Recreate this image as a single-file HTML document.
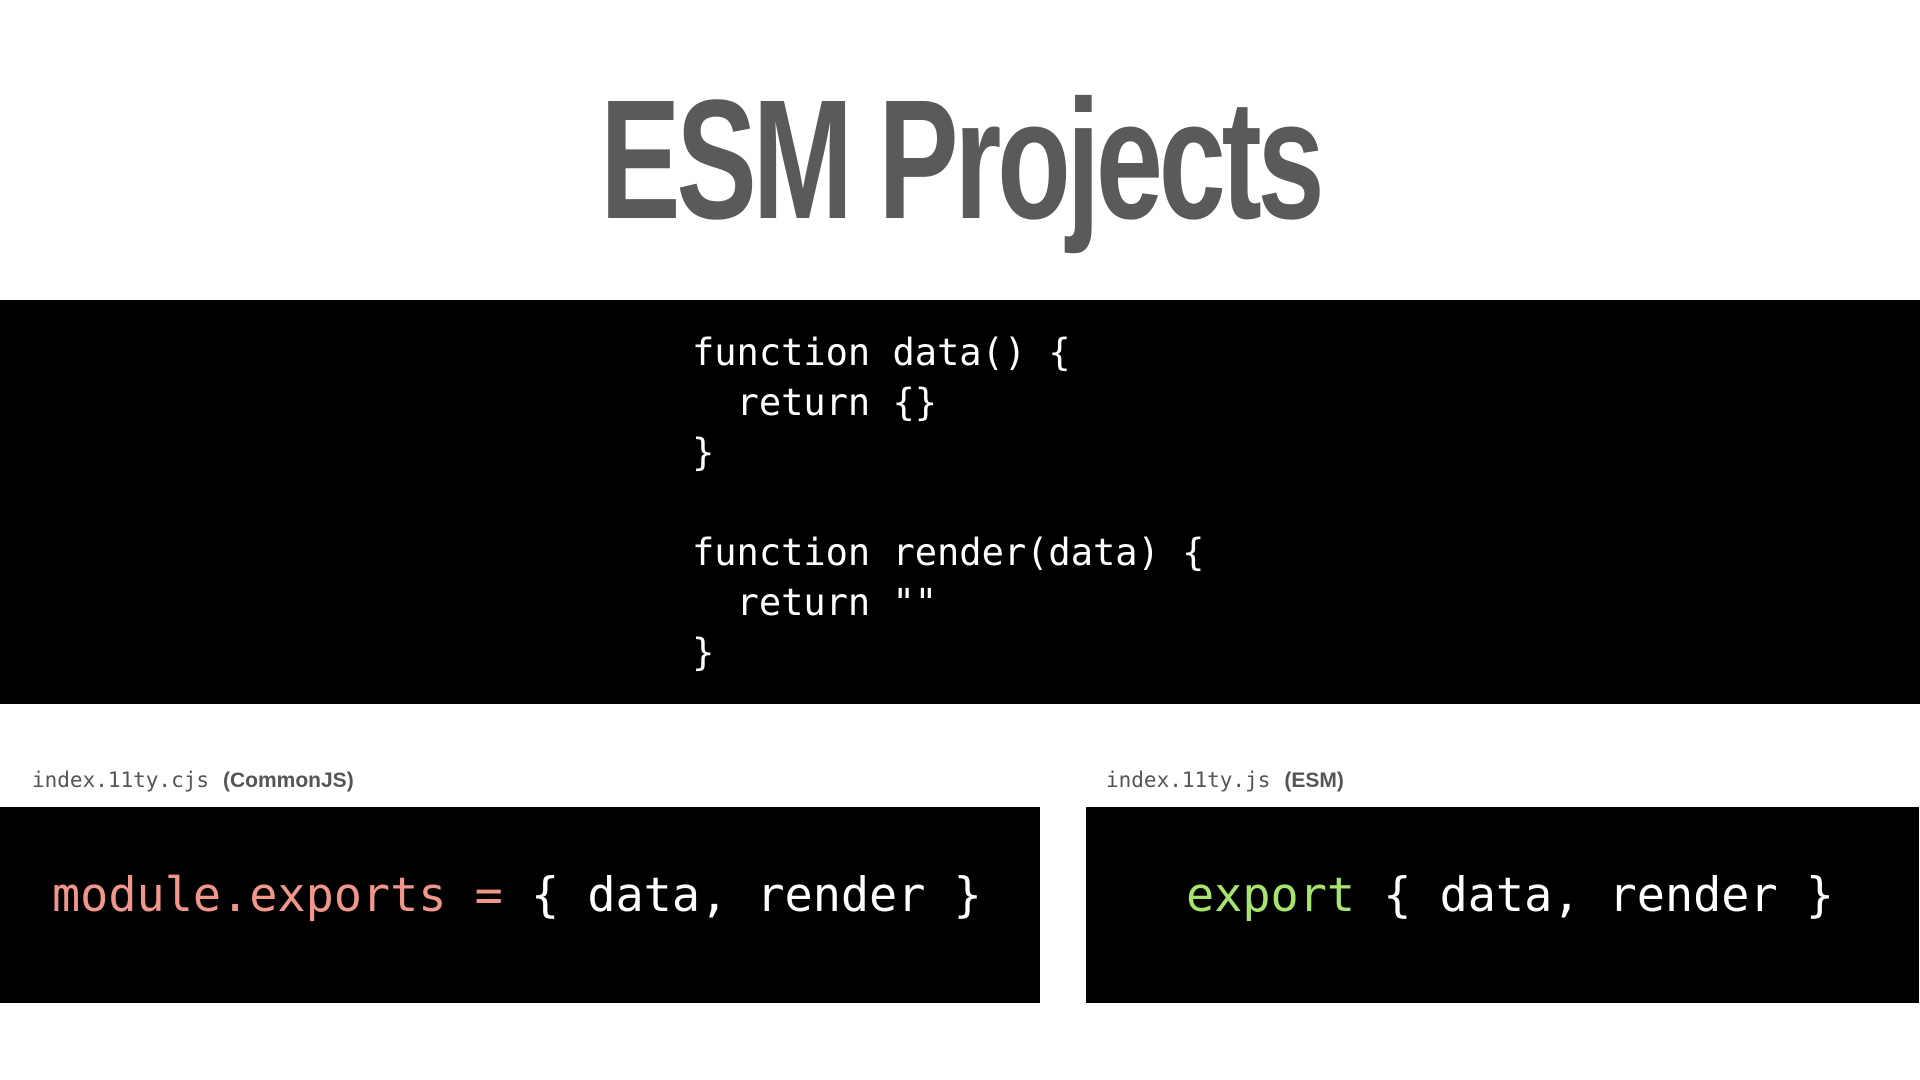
<!DOCTYPE html>
<html><head><meta charset="utf-8"><style>
html,body{margin:0;padding:0;background:#fff;width:1920px;height:1080px;overflow:hidden;position:relative;font-family:"Liberation Sans",sans-serif}
.title{position:absolute;left:0;width:1920px;top:60px;text-align:center;font-family:"Liberation Sans Narrow","Liberation Sans",sans-serif;font-weight:bold;font-size:170px;color:#5a5a5a;letter-spacing:-6px;line-height:200px}
.title span{display:inline-block;transform:scaleX(0.71);transform-origin:center}
.band{position:absolute;left:0;top:300px;width:1920px;height:404px;background:#000}
pre{margin:0;font-family:"DejaVu Sans Mono","Liberation Mono",monospace}
.code{position:absolute;left:692px;top:328px;color:#fff;font-size:37px;line-height:50px}
.lbl{position:absolute;top:768px;font-size:21px;color:#555}
.lbl .m{font-family:"DejaVu Sans Mono","Liberation Mono",monospace;font-size:21px}
.lbl b{font-family:"Liberation Sans",sans-serif;margin-left:14px;font-size:21px}
.box{position:absolute;top:807px;height:196px;background:#000}
.bc{position:absolute;top:869px;font-size:46.8px;color:#fff;white-space:pre;font-family:"DejaVu Sans Mono","Liberation Mono",monospace}
</style></head><body>
<div class="title"><span>ESM Projects</span></div>
<div class="band"></div>
<pre class="code">function data() {
  return {}
}

function render(data) {
  return ""
}</pre>
<div class="lbl" style="left:32px"><span class="m">index.11ty.cjs</span><b>(CommonJS)</b></div>
<div class="lbl" style="left:1106px"><span class="m">index.11ty.js</span><b>(ESM)</b></div>
<div class="box" style="left:0;width:1040px"></div>
<div class="box" style="left:1086px;width:833px"></div>
<div class="bc" style="left:52px"><span style="color:#f0968a">module.exports =</span> { data, render }</div>
<div class="bc" style="left:1186px"><span style="color:#a6e36f">export</span> { data, render }</div>
</body></html>
